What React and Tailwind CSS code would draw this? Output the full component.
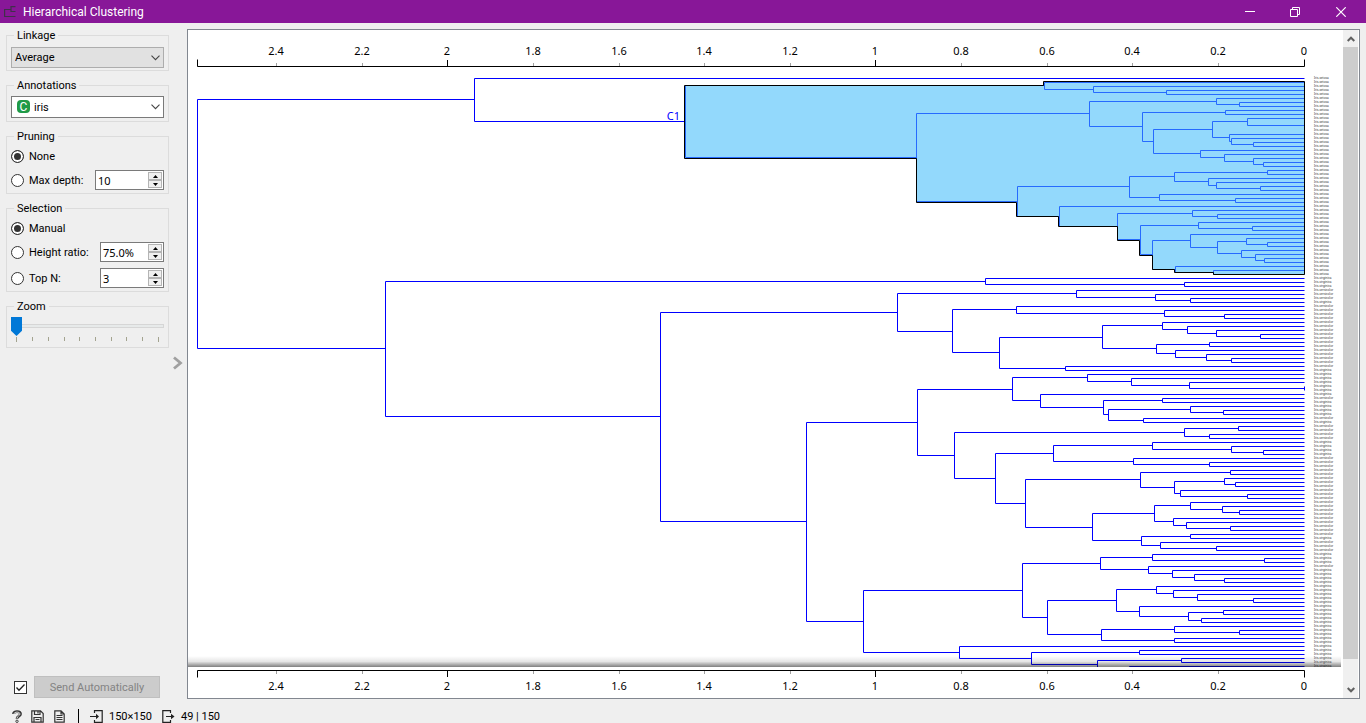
import React from "react";

/* ---------- dendrogram data ---------- */
const L = null;
const n = (x, a, b) => ({ x, a, b });

const setosaCluster = n(
  685,
  n(1044, L, n(1093, L, n(1166, L, L))),
  n(
    916,
    n(
      1089,
      n(1216, L, n(1239, L, L)),
      n(
        1142,
        n(1225, L, L),
        n(
          1153,
          n(1212, n(1247, L, n(1304, L, n(1304, L, L))), n(1229, L, n(1231, L, n(1253, L, L)))),
          n(1200, L, n(1224, L, n(1253, L, n(1263, L, L))))
        )
      )
    ),
    n(
      1017,
      n(
        1129,
        n(1174, n(1267, L, L), n(1208, L, n(1216, L, n(1260, L, L)))),
        n(1159, L, n(1235, L, L))
      ),
      n(
        1059,
        L,
        n(
          1117,
          n(1192, L, n(1217, L, L)),
          n(
            1140,
            n(1198, L, n(1252, L, L)),
            n(
              1152,
              n(
                1190,
                L,
                n(1217, n(1246, L, n(1267, L, L)), n(1241, L, n(1255, L, n(1264, L, L))))
              ),
              n(1175, L, n(1213, L, L))
            )
          )
        )
      )
    )
  )
);

const upperMixed = n(
  897,
  n(1076, L, n(1155, L, n(1190, L, L))),
  n(
    952,
    n(1016, L, n(1164, L, n(1224, L, L))),
    n(
      999,
      n(
        1102,
        n(1162, L, n(1187, L, n(1216, L, n(1260, L, L)))),
        n(1156, n(1209, L, L), n(1175, L, n(1206, L, n(1231, L, L))))
      ),
      n(1065, L, L)
    )
  )
);

const middleMixed = n(
  917,
  n(
    1012,
    n(1087, L, n(1131, L, n(1189, L, n(1304, L, L)))),
    n(
      1040,
      L,
      n(1103, n(1162, L, L), n(1108, n(1190, L, n(1223, L, L)), n(1143, L, L)))
    )
  ),
  n(
    954,
    n(1184, n(1238, L, L), n(1209, L, L)),
    n(
      995,
      n(1053, n(1152, L, n(1231, L, n(1263, L, L))), n(1133, L, n(1209, L, L))),
      n(
        1025,
        n(
          1140,
          n(1230, L, L),
          n(1174, n(1224, L, n(1235, L, L)), n(1180, L, n(1247, L, L)))
        ),
        n(
          1092,
          n(
            1154,
            n(1190, L, n(1222, L, n(1239, L, L))),
            n(1173, L, n(1186, L, n(1230, L, L)))
          ),
          n(1141, n(1190, L, L), n(1160, L, n(1216, L, L)))
        )
      )
    )
  )
);

const lowerMixed = n(
  863,
  n(
    1022,
    n(
      1100,
      n(1152, L, n(1264, L, L)),
      n(1148, L, n(1172, L, n(1194, L, n(1224, L, L))))
    ),
    n(
      1047,
      n(
        1116,
        n(1156, L, n(1173, L, n(1197, L, n(1253, L, L)))),
        n(1139, L, n(1188, n(1223, L, L), n(1201, L, L)))
      ),
      n(1101, n(1174, L, n(1239, L, L)), n(1174, L, L))
    )
  ),
  n(959, L, n(1031, n(1139, L, L), n(1097, n(1181, L, L), n(1129, L, L))))
);

const tree = n(
  197,
  n(474, L, setosaCluster),
  n(385, n(985, L, n(1184, L, L)), n(660, upperMixed, n(806, middleMixed, lowerMixed)))
);

const LEAF_X = 1304;
const FIRST_Y = 78;
const STEP = 4;

function layout(root) {
  let leaf = 0;
  const plain = [];
  const selected = [];
  const walk = (node, inside) => {
    if (!node) return { x: LEAF_X, y: FIRST_Y + STEP * leaf++ };
    const sel = inside || node === setosaCluster;
    const a = walk(node.a, sel);
    const b = walk(node.b, sel);
    const ya = Math.floor(a.y) + 0.5;
    const yb = Math.floor(b.y) + 0.5;
    const d = `M${a.x + 0.5} ${ya}H${node.x + 0.5}V${yb}H${b.x + 0.5}`;
    (sel ? selected : plain).push(d);
    return { x: node.x, y: (a.y + b.y) / 2 };
  };
  walk(root, false);
  return { plain: plain.join(""), selected: selected.join("") };
}

const { plain, selected } = layout(tree);

const outline =
  "M684.5 85.5V158.5H916.5V202.5H1016.5V216.5H1058.5V226.5H1117.5V240.5H1139.5V255.5H1152.5V269.5H1174.5V272.5H1213.5V274.5H1304.5V81.5H1043.5V85.5Z";

const runs = [
  ["Iris-setosa", 50],
  ["Iris-virginica", 3],
  ["Iris-versicolor", 3],
  ["Iris-virginica", 1],
  ["Iris-versicolor", 16],
  ["Iris-virginica", 7],
  ["Iris-versicolor", 1],
  ["Iris-virginica", 4],
  ["Iris-versicolor", 1],
  ["Iris-virginica", 1],
  ["Iris-versicolor", 4],
  ["Iris-virginica", 4],
  ["Iris-versicolor", 20],
  ["Iris-virginica", 1],
  ["Iris-versicolor", 3],
  ["Iris-virginica", 3],
  ["Iris-versicolor", 1],
  ["Iris-virginica", 25],
];
const labels = runs.flatMap(([name, count]) => Array(count).fill(name));

const ticks = [2.4, 2.2, 2, 1.8, 1.6, 1.4, 1.2, 1, 0.8, 0.6, 0.4, 0.2, 0];
const tickX = (v) => Math.round(1303.72 - 428.25 * v) + 0.5;

function Axis({ flipped }) {
  const base = flipped ? 3.5 : 36.5;
  const dir = flipped ? 1 : -1;
  const end = base + dir * 7;
  return (
    <svg
      viewBox={flipped ? "188 0 1155 31" : "188 0 1155 40"}
      className="block w-full"
      fontFamily="'Noto Sans', sans-serif"
      fontSize="11"
    >
      <path
        d={`M197.5 ${end}V${base}H1304.5V${end}`}
        fill="none"
        stroke="#000"
      />
      {ticks.slice(0, -1).map((v) => (
        <path
          key={v}
          d={`M${tickX(v)} ${base + dir * 0.5}v${dir * (Number.isInteger(v) ? 6 : 3)}`}
          stroke={Number.isInteger(v) ? "#000" : "#a0a0a0"}
        />
      ))}
      {ticks.map((v) => (
        <text key={v} x={tickX(v) - 0.5} y={flipped ? 23 : 25} textAnchor="middle">
          {v}
        </text>
      ))}
    </svg>
  );
}

function Dendrogram() {
  return (
    <svg viewBox="188 70 1155 597" className="block w-full" fontFamily="'Noto Sans', sans-serif">
      <defs>
        <linearGradient id="edge" x1="0" y1="0" x2="0" y2="1">
          <stop offset="0" stopColor="#000" stopOpacity="0" />
          <stop offset="0.5" stopColor="#000" stopOpacity="0.1" />
          <stop offset="1" stopColor="#000" stopOpacity="0.5" />
        </linearGradient>
      </defs>
      <path d={plain} fill="none" stroke="#0000ff" />
      <path d={outline} fill="#93d9fc" />
      <path d={selected} fill="none" stroke="#266bff" />
      <path d={outline} fill="none" stroke="#000" />
      <text x="680" y="120" fontSize="11" fill="#0000ff" textAnchor="end">
        C1
      </text>
      {labels.map((name, i) => (
        <text key={i} x="1314" y={FIRST_Y + STEP * i + 1} fontSize="3" fill="#222">
          {name}
        </text>
      ))}
      <rect x="188" y="656" width="1153" height="11" fill="url(#edge)" />
    </svg>
  );
}

/* ---------- controls ---------- */
function Group({ title, className, children }) {
  return (
    <fieldset className="w-full min-w-0 border border-[#dcdcdc] px-1">
      <legend className="ml-[3px] h-4 px-[3px] leading-[18px]">{title}</legend>
      <div className={className}>{children}</div>
    </fieldset>
  );
}

function Chevron() {
  return (
    <svg
      viewBox="0 0 9 6"
      className="pointer-events-none absolute right-1 top-1/2 h-1.5 w-[9px] -translate-y-1/2"
      fill="none"
      stroke="#444"
      strokeWidth="1.1"
    >
      <path d="M.5 .7 4.5 4.7 8.5 .7" />
    </svg>
  );
}

function Radio({ id, name, label, checked }) {
  return (
    <>
      <input
        id={id}
        type="radio"
        name={name}
        defaultChecked={checked}
        className="m-0 size-[13px] shrink-0 appearance-none rounded-full border border-[#333] bg-white checked:bg-[#333] checked:shadow-[inset_0_0_0_2px_#fff]"
      />
      <label htmlFor={id} className="ml-[5px] whitespace-nowrap pt-0.5">
        {label}
      </label>
    </>
  );
}

function Spin({ label, value, wide }) {
  return (
    <div
      className={
        (wide ? "w-[69px]" : "w-16") + " ml-auto flex h-5 border border-[#7a7a7a] bg-white"
      }
    >
      <input
        aria-label={label}
        defaultValue={value}
        className="w-0 min-w-0 flex-1 bg-transparent pl-0.5 pt-0.5 font-['Noto_Sans',sans-serif] outline-none"
      />
      <div className="flex w-[15px] flex-col py-px pr-px">
        {["Increase", "Decrease"].map((t) => (
          <button
            key={t}
            aria-label={`${t} ${label}`}
            className="flex w-full flex-1 items-center justify-center border border-[#b4b4b4] bg-[#f0f0f0]"
          >
            <svg viewBox="0 0 5 3" className="h-[3px] w-[5px]" fill="#000">
              <path d={t === "Increase" ? "M0 3 2.5 0 5 3Z" : "M0 0 2.5 3 5 0Z"} />
            </svg>
          </button>
        ))}
      </div>
    </div>
  );
}

const sliderTicks = [5, 21, 37, 53, 68, 84, 100, 115, 131, 147];

function Sidebar() {
  return (
    <aside className="flex w-[169px] shrink-0 flex-col gap-1.5 pl-1.5 pt-1">
      <Group title="Linkage" className="pb-0.5 pt-1">
        <div className="relative">
          <select
            aria-label="Linkage"
            className="block h-[21px] w-full appearance-none border border-[#adadad] bg-[#e1e1e1] pl-[3px] pt-0.5"
          >
            <option>Average</option>
          </select>
          <Chevron />
        </div>
      </Group>
      <Group title="Annotations" className="py-[3px]">
        <div className="relative">
          <select
            aria-label="Annotations"
            className="block h-[22px] w-full appearance-none border border-[#7a7a7a] bg-white pl-[22px] pt-0.5"
          >
            <option>iris</option>
          </select>
          <span className="pointer-events-none absolute left-1.5 top-1 flex size-[13px] items-center justify-center rounded-sm bg-[#1f9a47] text-[12px] leading-none text-white">
            C
          </span>
          <Chevron />
        </div>
      </Group>
      <Group title="Pruning" className="flex flex-col gap-1 pb-[3px] pt-0.5">
        <div className="flex h-5 items-center">
          <Radio id="p-none" name="pruning" label="None" checked />
        </div>
        <div className="flex h-5 items-center">
          <Radio id="p-depth" name="pruning" label="Max depth:" />
          <Spin label="max depth" value="10" wide />
        </div>
      </Group>
      <Group title="Selection" className="flex flex-col gap-1 pb-[3px] pt-0.5">
        <div className="flex h-5 items-center">
          <Radio id="s-manual" name="selection" label="Manual" checked />
        </div>
        <div className="flex flex-col gap-1.5">
          <div className="flex h-5 items-center">
            <Radio id="s-ratio" name="selection" label="Height ratio:" />
            <Spin label="height ratio" value="75.0%" />
          </div>
          <div className="flex h-5 items-center">
            <Radio id="s-top" name="selection" label="Top N:" />
            <Spin label="top N" value="3" />
          </div>
        </div>
      </Group>
      <Group title="Zoom" className="pb-[5px] pt-0.5">
        <input
          type="range"
          aria-label="Zoom"
          min="0"
          max="9"
          defaultValue="0"
          className="block h-5 w-full appearance-none bg-transparent [&::-webkit-slider-runnable-track]:h-1 [&::-webkit-slider-runnable-track]:bg-[#e7eaea] [&::-webkit-slider-runnable-track]:shadow-[inset_0_0_0_1px_#d6d6d6] [&::-webkit-slider-thumb]:-mt-[7px] [&::-webkit-slider-thumb]:h-[19px] [&::-webkit-slider-thumb]:w-[11px] [&::-webkit-slider-thumb]:appearance-none [&::-webkit-slider-thumb]:bg-[#0078d7] [&::-webkit-slider-thumb]:[clip-path:polygon(0_0,100%_0,100%_72%,50%_100%,0_72%)]"
        />
        <svg viewBox="0 0 153 6" className="block w-full" stroke="#a3a38f">
          {sliderTicks.map((x, i) => (
            <path key={x} d={`M${x + 0.5} 1v${i % 9 === 0 ? 5 : 4}`} />
          ))}
        </svg>
      </Group>
      <div className="mb-[5px] mt-auto flex items-center pl-2">
        <input
          type="checkbox"
          id="auto"
          aria-label="Send automatically when data changes"
          defaultChecked
          className="peer size-[13px] shrink-0 appearance-none border border-[#333] bg-white"
        />
        <svg
          viewBox="0 0 13 13"
          className="pointer-events-none -ml-[13px] hidden size-[13px] peer-checked:block"
          fill="none"
          stroke="#222"
          strokeWidth="1.3"
        >
          <path d="M2.5 6.5 5 9.3 10.5 3.5" />
        </svg>
        <button
          disabled
          className="ml-[7px] h-[22px] w-[126px] border border-[#bfbfbf] bg-[#cccccc] pt-0.5 text-[#838383]"
        >
          Send Automatically
        </button>
      </div>
    </aside>
  );
}

function ScrollArrow({ down }) {
  return (
    <button
      aria-label={down ? "Scroll down" : "Scroll up"}
      className="flex h-[17px] w-full items-center justify-center"
    >
      <svg viewBox="0 0 8 6" className="h-1.5 w-2" fill="none" stroke="#606060" strokeWidth="2">
        <path d={down ? "M.7 1 4 4.3 7.3 1" : "M.7 5 4 1.7 7.3 5"} />
      </svg>
    </button>
  );
}

function TitleBar() {
  return (
    <header className="flex h-[23px] items-center bg-[#881798] text-white">
      <svg viewBox="0 0 12 12" className="ml-1 size-3" fill="none" stroke="#40304a" strokeWidth="1.2">
        <path d="M6.500 3.500H.6V10.500H11.500M11.500 .6H7V5.500H11.500" />
      </svg>
      <h1 className="ml-[7px] text-[12px]">Hierarchical Clustering</h1>
      <div className="ml-auto flex h-full">
        <button aria-label="Minimize" className="flex w-[45px] items-center justify-center">
          <svg viewBox="0 0 10 10" className="size-2.5" stroke="#fff">
            <path d="M0 4.500H10" />
          </svg>
        </button>
        <button aria-label="Restore" className="flex w-[46px] items-center justify-center">
          <svg viewBox="0 0 10 10" className="size-2.5" stroke="#fff" fill="none">
            <path d="M.5 2.500H7.500V9.500H.5ZM2.500 2.500V.5H9.500V7.500H7.500" />
          </svg>
        </button>
        <button aria-label="Close" className="mr-0.5 flex w-[46px] items-center justify-center">
          <svg viewBox="0 0 10 10" className="size-2.5" stroke="#fff" strokeWidth="1.2">
            <path d="M.3 .3 9.700 9.700M9.700 .3 .3 9.700" />
          </svg>
        </button>
      </div>
    </header>
  );
}

function StatusBar() {
  return (
    <footer className="flex h-5 items-center overflow-hidden pl-3 pt-1.5 leading-none">
      <button aria-label="Help">
        <svg viewBox="0 0 10 13" className="block h-[13px] w-2.5" fill="none">
          <path d="M1.500 4C1.500 .8 8.500 .8 8.500 4 8.500 6.200 5 6 5 8.800" stroke="#333" strokeWidth="2.800" />
          <path d="M1.900 4C2.200 1.500 8 1.500 8 4 8 5.800 5 6 5 8.300" stroke="#efefef" strokeWidth=".9" />
          <circle cx="5" cy="11.300" r="1.200" fill="#efefef" stroke="#333" strokeWidth=".9" />
        </svg>
      </button>
      <button aria-label="Save image" className="ml-[9px]">
        <svg viewBox="0 0 13 13" className="block size-[13px]" fill="none" stroke="#333" strokeWidth="1.200">
          <path d="M.8 .8H9.500L12.200 3.500V12.200H.8ZM3.500 .8V4.500H9V.8M7 1.500V3.500M3 12V7.500H10V12M4.500 9.500H8.500" />
        </svg>
      </button>
      <button aria-label="Report" className="ml-2.5">
        <svg viewBox="0 0 11 13" className="block h-[13px] w-[11px]" fill="none" stroke="#333" strokeWidth="1.200">
          <path d="M.8 .8H7L10.200 4V12.200H.8ZM7 .8V4H10M2.500 5.500H8.500M2.500 7.500H8.500M2.500 9.500H8.500" />
        </svg>
      </button>
      <span className="ml-[13px] h-[15px] w-px bg-black" />
      <svg viewBox="0 0 13 13" className="ml-[11px] size-[13px]" fill="none" stroke="#222" strokeWidth="1.200">
        <path d="M4.500 3V.6H12.200V12.400H4.500V10M0 6.500H7.500" />
        <path d="M6 3.800 9 6.500 6 9.200Z" fill="#222" stroke="none" />
      </svg>
      <span className="ml-1.5">150×150</span>
      <svg viewBox="0 0 13 13" className="ml-2.5 size-[13px]" fill="none" stroke="#222" strokeWidth="1.200">
        <path d="M8.500 3V.6H.8V12.400H8.500V10M4 6.500H10" />
        <path d="M9 3.800 12.500 6.500 9 9.200Z" fill="#222" stroke="none" />
      </svg>
      <span className="ml-1.5">49 | 150</span>
    </footer>
  );
}

export default function App() {
  return (
    <div className="flex min-h-screen flex-col bg-[#efefef] font-[Roboto,sans-serif] text-[11px] text-black">
      <TitleBar />
      <div className="flex flex-1">
        <Sidebar />
        <div className="flex w-[18px] shrink-0 items-center justify-center">
          <button aria-label="Collapse controls">
            <svg viewBox="0 0 10 14" className="block h-[14px] w-2.5" fill="none" stroke="#a0a0a0" strokeWidth="2.800">
              <path d="M1 1.500 7.500 7 1 12.500" />
            </svg>
          </button>
        </div>
        <main className="mr-1.5 mt-1.5 flex min-w-0 flex-1 self-start border border-[#828790] bg-white">
          <div className="min-w-0 flex-1">
            <Axis />
            <Dendrogram />
            <Axis flipped />
          </div>
          <div className="mr-px flex w-[15px] flex-col bg-[#f0f0f0]">
            <ScrollArrow />
            <div className="flex-1 pb-[22px]">
              <div className="h-full bg-[#cdcdcd]" />
            </div>
            <ScrollArrow down />
          </div>
        </main>
      </div>
      <StatusBar />
    </div>
  );
}
